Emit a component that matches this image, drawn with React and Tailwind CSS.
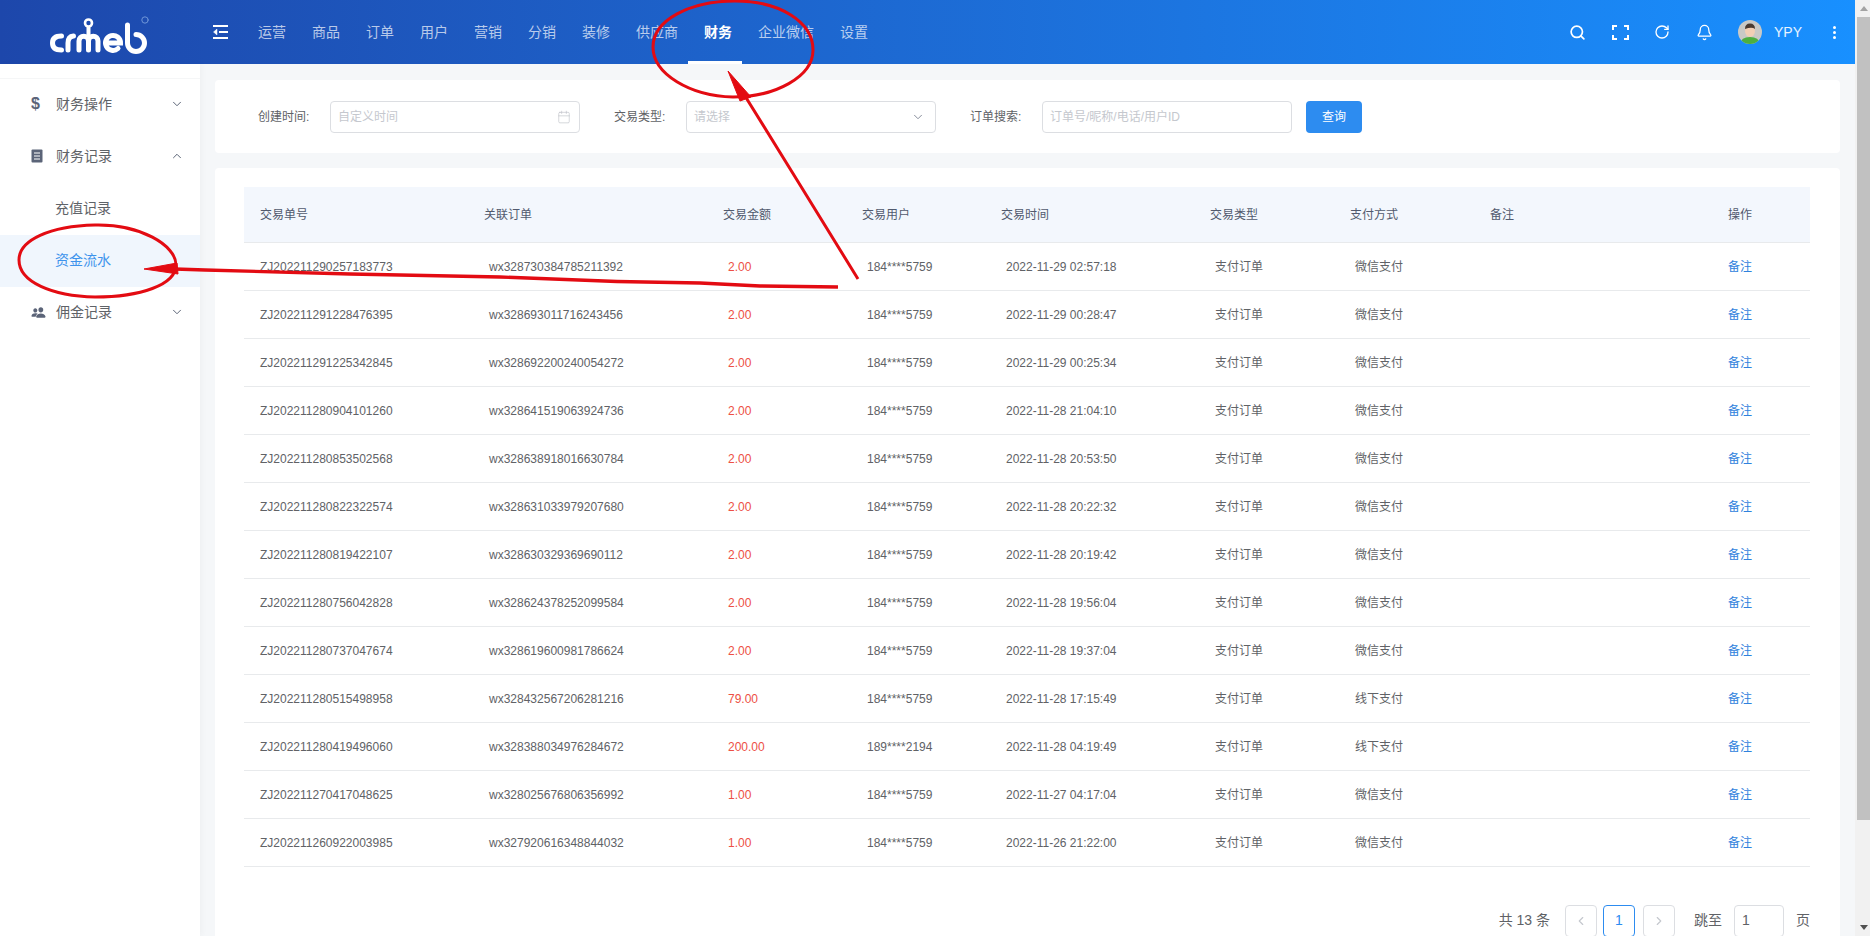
import React from "react";
import { Search, RotateCw, Bell, ChevronDown, ChevronUp, Calendar, ChevronLeft, ChevronRight } from "lucide-react";
import { IoPeople } from "react-icons/io5";

const nav = ["运营", "商品", "订单", "用户", "营销", "分销", "装修", "供应商", "财务", "企业微信", "设置"];

const rows = [
  ["ZJ202211290257183773", "wx328730384785211392", "2.00", "184****5759", "2022-11-29 02:57:18", "微信支付"],
  ["ZJ202211291228476395", "wx328693011716243456", "2.00", "184****5759", "2022-11-29 00:28:47", "微信支付"],
  ["ZJ202211291225342845", "wx328692200240054272", "2.00", "184****5759", "2022-11-29 00:25:34", "微信支付"],
  ["ZJ202211280904101260", "wx328641519063924736", "2.00", "184****5759", "2022-11-28 21:04:10", "微信支付"],
  ["ZJ202211280853502568", "wx328638918016630784", "2.00", "184****5759", "2022-11-28 20:53:50", "微信支付"],
  ["ZJ202211280822322574", "wx328631033979207680", "2.00", "184****5759", "2022-11-28 20:22:32", "微信支付"],
  ["ZJ202211280819422107", "wx328630329369690112", "2.00", "184****5759", "2022-11-28 20:19:42", "微信支付"],
  ["ZJ202211280756042828", "wx328624378252099584", "2.00", "184****5759", "2022-11-28 19:56:04", "微信支付"],
  ["ZJ202211280737047674", "wx328619600981786624", "2.00", "184****5759", "2022-11-28 19:37:04", "微信支付"],
  ["ZJ202211280515498958", "wx328432567206281216", "79.00", "184****5759", "2022-11-28 17:15:49", "线下支付"],
  ["ZJ202211280419496060", "wx328388034976284672", "200.00", "189****2194", "2022-11-28 04:19:49", "线下支付"],
  ["ZJ202211270417048625", "wx328025676806356992", "1.00", "184****5759", "2022-11-27 04:17:04", "微信支付"],
  ["ZJ202211260922003985", "wx327920616348844032", "1.00", "184****5759", "2022-11-26 21:22:00", "微信支付"],
];

function Logo() {
  return (
    <svg width="200" height="64" viewBox="0 0 200 64" fill="none" stroke="#fff" strokeLinecap="round">
      <path d="M61.5 36 Q52.5 36 52.5 43 Q52.5 50 61.5 50" strokeWidth="5" />
      <path d="M68 50 V43 Q68 36.5 73.5 36" strokeWidth="5" />
      <path d="M79 50 V41 a4.75 4.75 0 0 1 9.5 0 V50 M88.5 41 a4.75 4.75 0 0 1 9.5 0 V50" strokeWidth="5" />
      <circle cx="88.5" cy="23" r="3.5" strokeWidth="2.6" />
      <path d="M88.5 28 V36" strokeWidth="4" />
      <path d="M105.5 43 H120.5 A7.5 7.5 0 1 0 118 48.5" strokeWidth="5" />
      <path d="M127.5 25 V43 A8.5 8.5 0 1 0 136 34.5" strokeWidth="5" />
      <circle cx="145" cy="20" r="3.2" stroke="#6f96d8" strokeWidth="1" />
    </svg>
  );
}

function MenuFold() {
  return (
    <svg width="16" height="14" viewBox="0 0 16 14" fill="none" stroke="#fff" strokeWidth="2">
      <path d="M0 1 H15 M6 7 H15 M0 13 H15" />
      <path d="M4 4 L0.5 7 L4 10 Z" fill="#fff" strokeWidth="0.5" />
    </svg>
  );
}

function FullIcon() {
  return (
    <svg width="17" height="15" viewBox="0 0 17 15" fill="none" stroke="#fff" strokeWidth="2">
      <path d="M1 5 V1 H5 M12 1 H16 V5 M1 10 V14 H5 M12 14 H16 V10" />
    </svg>
  );
}

function Avatar() {
  return (
    <svg width="24" height="24" viewBox="0 0 24 24" className="rounded-full">
      <rect width="24" height="24" fill="#c9c9c6" />
      <path d="M2 24 Q3 17 12 17 Q21 17 22 24 Z" fill="#4caf3f" />
      <ellipse cx="12" cy="11" rx="5" ry="6" fill="#f2cfb5" />
      <path d="M7 9 Q7 3.5 12 3.5 Q17 3.5 17 9 Q14 6.5 7 9 Z" fill="#4a3a30" />
    </svg>
  );
}

function DocIcon() {
  return (
    <svg width="12" height="14" viewBox="0 0 12 14">
      <rect x="0.5" y="0.5" width="11" height="13" rx="1" fill="#5b6478" />
      <path d="M3 4 H9 M3 7 H9 M3 10 H9" stroke="#fff" strokeWidth="1" />
    </svg>
  );
}

function SideItem({ icon, label, open }) {
  const Chev = open ? ChevronUp : ChevronDown;
  return (
    <div className="flex h-[52px] items-center pb-[2px] pl-[31px] pr-[16px] text-[14px] text-[#5f6368]">
      <span className="flex w-[25px] items-center">{icon}</span>
      <span className="flex-1">{label}</span>
      <Chev size={14} strokeWidth={1.6} className="text-[#515a6e]" />
    </div>
  );
}

function Field({ label, children }) {
  return (
    <div className="flex items-center">
      <label className="w-[72px] text-[12px] text-[#606266]">{label}</label>
      <div className="flex h-[32px] w-[250px] items-center rounded border border-[#dcdee2] bg-white pl-[7px] pr-[10px] text-[12px]">
        {children}
      </div>
    </div>
  );
}

const heads = [
  ["交易单号", "w-[224px]"],
  ["关联订单", "w-[239px]"],
  ["交易金额", "w-[139px]"],
  ["交易用户", "w-[139px]"],
  ["交易时间", "w-[209px]"],
  ["交易类型", "w-[140px]"],
  ["支付方式", "w-[140px]"],
  ["备注", "w-[238px]"],
  ["操作", "w-[98px]"],
];

export default function App() {
  return (
    <div className="relative flex h-[936px] w-[1870px] overflow-hidden bg-[#f5f7f9] font-[Liberation_Sans,Noto_Sans_CJK_SC,sans-serif]">
      <div className="flex min-w-0 flex-1 flex-col">
        <header className="flex h-[64px] shrink-0 items-center bg-gradient-to-r from-[#1d47ab] to-[#1890ff] text-white">
          <div className="h-[64px] w-[200px] shrink-0">
            <Logo />
          </div>
          <div className="ml-[13px] flex w-[29px] shrink-0 items-center">
            <MenuFold />
          </div>
          <nav className="flex h-full">
            {nav.map((n) => (
              <div
                key={n}
                className={
                  n === "财务"
                    ? "flex h-full items-center border-b-[3px] border-white pl-[16px] pr-[10px] pt-[4px] text-[14px] font-bold text-white"
                    : "flex h-full items-center border-b-[3px] border-transparent pl-[16px] pr-[10px] pt-[4px] text-[14px] text-white/70"
                }
              >
                {n}
              </div>
            ))}
          </nav>
          <div className="ml-auto flex items-center pr-[19px]">
            <Search size={17} strokeWidth={2.4} />
            <span className="ml-[26px] flex"><FullIcon /></span>
            <RotateCw size={16} strokeWidth={2} className="ml-[25px]" />
            <Bell size={17} strokeWidth={1.8} className="ml-[26px]" />
            <span className="ml-[25px] flex"><Avatar /></span>
            <span className="ml-[12px] text-[14px] text-white/90">YPY</span>
            <span className="ml-[31px] flex flex-col gap-[2px]">
              <i className="block h-[3px] w-[3px] rounded-full bg-white" />
              <i className="block h-[3px] w-[3px] rounded-full bg-white" />
              <i className="block h-[3px] w-[3px] rounded-full bg-white" />
            </span>
          </div>
        </header>
        <div className="flex min-h-0 flex-1">
          <aside className="w-[200px] shrink-0 bg-white shadow-[2px_0_6px_rgba(0,21,41,0.03)]">
            <div className="h-[15px] border-b border-[#f5f6f7]" />
            <SideItem icon={<span className="text-[16px] font-bold leading-none text-[#5b6478]">$</span>} label="财务操作" />
            <SideItem icon={<DocIcon />} label="财务记录" open />
            <div className="flex h-[52px] items-center pb-[2px] pl-[55px] text-[14px] text-[#5f6368]">充值记录</div>
            <div className="flex h-[52px] items-center bg-[#f0f6fd] pb-[2px] pl-[55px] text-[14px] text-[#3d93ec]">资金流水</div>
            <SideItem icon={<IoPeople size={15} className="text-[#5b6478]" />} label="佣金记录" />
          </aside>
          <main className="min-w-0 flex-1 px-[15px] pt-[16px]">
            <section className="flex h-[73px] items-start gap-[34px] rounded-sm bg-white pl-[43px] pt-[21px]">
              <Field label="创建时间:">
                <input readOnly placeholder="自定义时间" className="min-w-0 flex-1 bg-transparent outline-none placeholder:text-[#c5c8ce]" />
                <Calendar size={14} strokeWidth={1} className="-mr-[2px] text-[#b8bbc2]" />
              </Field>
              <Field label="交易类型:">
                <span className="flex-1 text-[#c5c8ce]">请选择</span>
                <ChevronDown size={14} strokeWidth={1.6} className="text-[#808695]" />
              </Field>
              <Field label="订单搜索:">
                <input readOnly placeholder="订单号/昵称/电话/用户ID" className="min-w-0 flex-1 bg-transparent outline-none placeholder:text-[#c5c8ce]" />
              </Field>
              <button className="-ml-[20px] h-[32px] w-[56px] rounded bg-[#2d8cf0] text-[12px] text-white">查询</button>
            </section>
            <section className="mt-[15px] h-[800px] rounded-sm bg-white pl-[29px] pr-[30px] pt-[19px]">
              <table className="w-[1566px] table-fixed text-left text-[12px] text-[#606266]">
                <thead>
                  <tr className="h-[55px] border-b border-[#e8eaec] bg-[#f3f7fd]">
                    {heads.map(([h, w]) => (
                      <th key={h} className={`${w} pl-4 pt-[2px] font-normal text-[#515a6e]`}>{h}</th>
                    ))}
                  </tr>
                </thead>
                <tbody>
                  {rows.map((r) => (
                    <tr key={r[0]} className="h-[48px] border-b border-[#e8eaec]">
                      <td className="pl-4 pt-[1px]">{r[0]}</td>
                      <td className="pl-[21px] pt-[1px]">{r[1]}</td>
                      <td className="pl-[21px] pt-[1px] text-[#ed4f45]">{r[2]}</td>
                      <td className="pl-[21px] pt-[1px]">{r[3]}</td>
                      <td className="pl-[21px] pt-[1px]">{r[4]}</td>
                      <td className="pl-[21px] pt-[1px]">支付订单</td>
                      <td className="pl-[21px] pt-[1px]">{r[5]}</td>
                      <td />
                      <td className="pl-4 pt-[1px] text-[#2f82dd]">备注</td>
                    </tr>
                  ))}
                </tbody>
              </table>
              <div className="mt-[38px] flex items-start justify-end text-[14px] text-[#606266]">
                <span className="mt-[5px] mr-[15px]">共 13 条</span>
                <span className="flex h-[32px] w-[32px] items-center justify-center rounded border border-[#dcdee2] text-[#c5c8ce]"><ChevronLeft size={14} /></span>
                <span className="ml-[6px] flex h-[32px] w-[32px] items-center justify-center rounded border border-[#2d8cf0] text-[#2d8cf0]">1</span>
                <span className="ml-[8px] flex h-[32px] w-[32px] items-center justify-center rounded border border-[#dcdee2] text-[#c5c8ce]"><ChevronRight size={14} /></span>
                <span className="ml-[19px] mt-[5px]">跳至</span>
                <span className="ml-[12px] flex h-[32px] w-[50px] items-center rounded border border-[#dcdee2] pl-[7px]">1</span>
                <span className="ml-[12px] mt-[5px]">页</span>
              </div>
            </section>
          </main>
        </div>
      </div>
      <div className="flex w-[15px] shrink-0 flex-col bg-[#f1f1f1]">
        <div className="flex h-[17px] items-center justify-center pl-[2px] text-[#a3a3a3]">
          <svg width="8" height="5" viewBox="0 0 8 5"><path d="M4 0 L8 5 H0 Z" fill="currentColor" /></svg>
        </div>
        <div className="ml-[2px] h-[803px] bg-[#c1c1c1]" />
        <div className="mt-auto flex h-[17px] items-center justify-center pl-[2px] text-[#505050]">
          <svg width="8" height="5" viewBox="0 0 8 5"><path d="M0 0 H8 L4 5 Z" fill="currentColor" /></svg>
        </div>
      </div>
      <svg className="pointer-events-none absolute inset-0" width="1870" height="936" viewBox="0 0 1870 936" fill="none" stroke="#e30b12">
        <path d="M735 1 C780 1 813 22 813 50 C813 77 775 97 733 97 C690 96 653 74 653 47 C653 20 690 1 735 1 Z" strokeWidth="3" />
        <path d="M95 225 C140 224 176 245 176 265 C176 285 140 297 95 297 C52 296 19 282 19 260 C19 240 50 226 95 225 Z" strokeWidth="3" />
        <path d="M745 96 L797 180 L858 279" strokeWidth="3" />
        <path d="M728 71 L751 97 L740 101 Z" fill="#e30b12" strokeWidth="1" />
        <path d="M838 287 L760 286 L700 283 L617 281.5 L500 277 L350 274 L205 270 L175 269" strokeWidth="3.4" />
        <path d="M144 269 L177 263 L178 274 Z" fill="#e30b12" strokeWidth="1" />
      </svg>
    </div>
  );
}
